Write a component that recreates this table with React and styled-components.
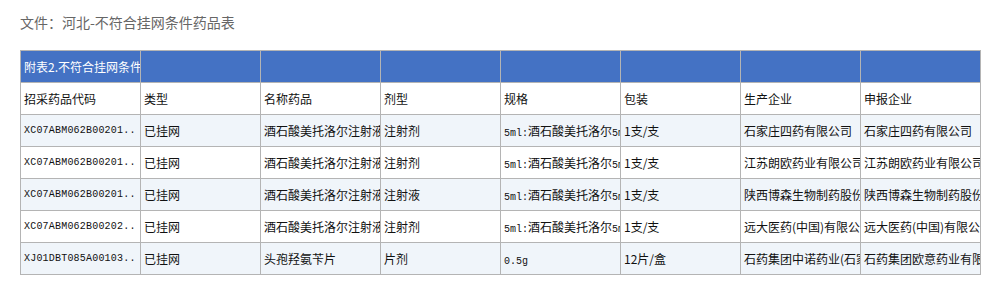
import React from "react";
import styled, { createGlobalStyle } from "styled-components";

const GlobalStyle = createGlobalStyle`
    body {
        margin: 0;
        background: #fff;
        font-family: "Noto Sans CJK SC", "Noto Sans", sans-serif;
    }
`;

const Page = styled.div`
    padding: 12px 20px;
`;

const Title = styled.div`
    font-size: 14px;
    line-height: 20px;
    color: #666;
    margin-bottom: 18px;
`;

const Table = styled.table`
    border-collapse: collapse;
    table-layout: fixed;
    width: 961px;
`;

const Col = styled.col`
    width: 120px;
`;

const Cell = styled.td`
    height: 31px;
    padding: 0 0 0 3px;
    border: 1px solid #b4b4b4;
    font-size: 12px;
    color: #111;
    white-space: nowrap;
    overflow: hidden;
    vertical-align: middle;
    font-family: ${({ $mono }) =>
        $mono
            ? '"Liberation Mono", "Noto Sans CJK SC", monospace'
            : '"Noto Sans CJK SC", "Noto Sans", sans-serif'};
    ${({ $mono }) => $mono && "font-size: 10px; letter-spacing: 0.2px;"}
`;

const BannerCell = styled(Cell)`
    background: #4472c4;
    color: #fff;
`;

const Row = styled.tr`
    background: ${({ $shade }) => ($shade ? "#f0f5fa" : "#fff")};
`;

const Spec = styled.span`
    font-family: "Liberation Mono", monospace;
    font-size: 10px;
`;

const Cjk = styled.span`
    font-family: "Noto Sans CJK SC", sans-serif;
    font-size: 12px;
`;

const headers = ["招采药品代码", "类型", "名称药品", "剂型", "规格", "包装", "生产企业", "申报企业"];

const rows = [
    ["XC07ABM062B00201..", "已挂网", "酒石酸美托洛尔注射液", "注射剂", "酒石酸美托洛尔", "1支/支", "石家庄四药有限公司", "石家庄四药有限公司"],
    ["XC07ABM062B00201..", "已挂网", "酒石酸美托洛尔注射液", "注射剂", "酒石酸美托洛尔", "1支/支", "江苏朗欧药业有限公司", "江苏朗欧药业有限公司"],
    ["XC07ABM062B00201..", "已挂网", "酒石酸美托洛尔注射液", "注射液", "酒石酸美托洛尔", "1支/支", "陕西博森生物制药股份集团有限公司", "陕西博森生物制药股份集团有限公司"],
    ["XC07ABM062B00202..", "已挂网", "酒石酸美托洛尔注射液", "注射剂", "酒石酸美托洛尔", "1支/支", "远大医药(中国)有限公司", "远大医药(中国)有限公司"],
    ["XJ01DBT085A00103..", "已挂网", "头孢羟氨苄片", "片剂", null, "12片/盒", "石药集团中诺药业(石家庄)有限公司", "石药集团欧意药业有限公司"],
];

const App = () => (
    <Page>
        <GlobalStyle />
        <Title>文件：河北-不符合挂网条件药品表</Title>
        <Table>
            <colgroup>
                {headers.map((h) => (
                    <Col key={h} />
                ))}
            </colgroup>
            <tbody>
                <tr>
                    <BannerCell>附表2.不符合挂网条件药品表</BannerCell>
                    {headers.slice(1).map((h) => (
                        <BannerCell key={h} />
                    ))}
                </tr>
                <Row>
                    {headers.map((h) => (
                        <Cell key={h}>{h}</Cell>
                    ))}
                </Row>
                {rows.map((r, i) => (
                    <Row key={i} $shade={i % 2 === 0}>
                        <Cell $mono>{r[0]}</Cell>
                        <Cell>{r[1]}</Cell>
                        <Cell>{r[2]}</Cell>
                        <Cell>{r[3]}</Cell>
                        <Cell>
                            {r[4] ? (
                                <>
                                    <Spec>5ml:</Spec>
                                    <Cjk>{r[4]}</Cjk>
                                    <Spec>5ml</Spec>
                                </>
                            ) : (
                                <Spec>0.5g</Spec>
                            )}
                        </Cell>
                        <Cell>{r[5]}</Cell>
                        <Cell>{r[6]}</Cell>
                        <Cell>{r[7]}</Cell>
                    </Row>
                ))}
            </tbody>
        </Table>
    </Page>
);

export default App;
